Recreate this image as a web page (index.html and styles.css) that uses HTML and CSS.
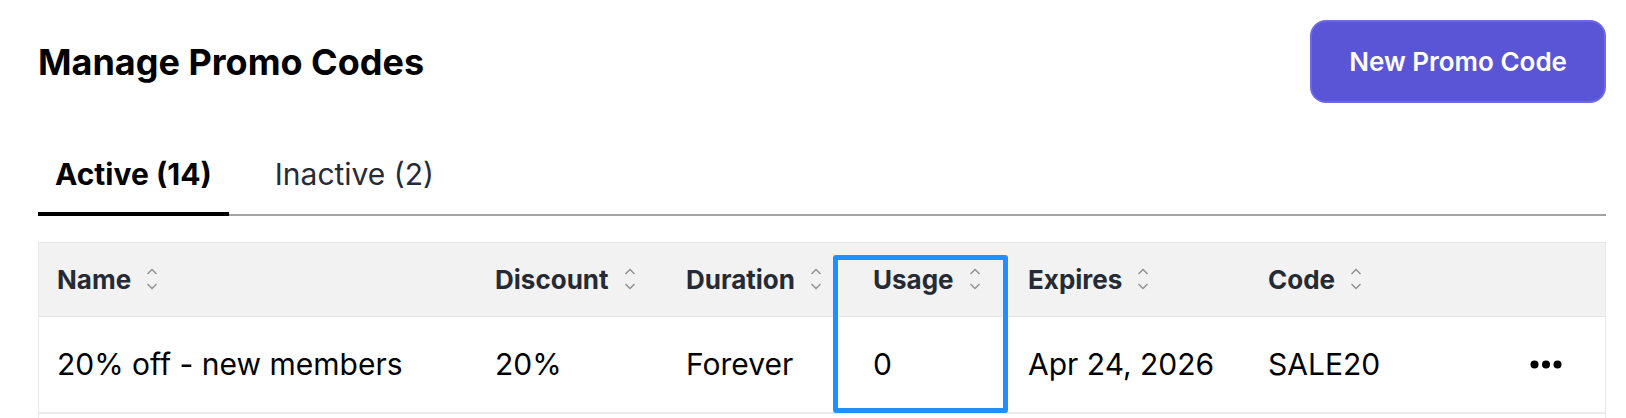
FILE: index.html
```html
<!DOCTYPE html>
<html lang="en">
<head>
<meta charset="utf-8">
<title>Manage Promo Codes</title>
<link rel="stylesheet" href="styles.css">
</head>
<body>
<div class="page">
  <header class="page-header">
    <h1 class="title">Manage Promo Codes</h1>
    <button class="btn-primary" type="button">New Promo Code</button>
  </header>

  <nav class="tabs">
    <a class="tab tab-active">Active (14)</a>
    <a class="tab">Inactive (2)</a>
  </nav>

  <div class="table-wrap">
    <table class="promo-table">
      <colgroup>
        <col class="col-name">
        <col class="col-discount">
        <col class="col-duration">
        <col class="col-usage">
        <col class="col-expires">
        <col class="col-code">
        <col class="col-actions">
      </colgroup>
      <thead>
        <tr>
          <th><span class="th-inner">Name<svg class="sort" viewBox="0 0 12 22"><polyline points="1.5,6 6,1.5 10.5,6"/><polyline points="1.5,16 6,20.5 10.5,16"/></svg></span></th>
          <th><span class="th-inner">Discount<svg class="sort" viewBox="0 0 12 22"><polyline points="1.5,6 6,1.5 10.5,6"/><polyline points="1.5,16 6,20.5 10.5,16"/></svg></span></th>
          <th><span class="th-inner">Duration<svg class="sort" viewBox="0 0 12 22"><polyline points="1.5,6 6,1.5 10.5,6"/><polyline points="1.5,16 6,20.5 10.5,16"/></svg></span></th>
          <th><span class="th-inner">Usage<svg class="sort" viewBox="0 0 12 22"><polyline points="1.5,6 6,1.5 10.5,6"/><polyline points="1.5,16 6,20.5 10.5,16"/></svg></span></th>
          <th><span class="th-inner">Expires<svg class="sort" viewBox="0 0 12 22"><polyline points="1.5,6 6,1.5 10.5,6"/><polyline points="1.5,16 6,20.5 10.5,16"/></svg></span></th>
          <th><span class="th-inner">Code<svg class="sort" viewBox="0 0 12 22"><polyline points="1.5,6 6,1.5 10.5,6"/><polyline points="1.5,16 6,20.5 10.5,16"/></svg></span></th>
          <th></th>
        </tr>
      </thead>
      <tbody>
        <tr>
          <td>20% off - new members</td>
          <td>20%</td>
          <td>Forever</td>
          <td>0</td>
          <td>Apr 24, 2026</td>
          <td>SALE20</td>
          <td><svg class="more" viewBox="0 0 32 9"><circle cx="4.5" cy="4.5" r="4"/><circle cx="16" cy="4.5" r="4"/><circle cx="27.5" cy="4.5" r="4"/></svg></td>
        </tr>
      </tbody>
    </table>
    <div class="highlight"></div>
  </div>
</div>
</body>
</html>
```

FILE: styles.css
```css
* { box-sizing: border-box; }

html, body {
  margin: 0;
  padding: 0;
  background: #ffffff;
}

body {
  font-family: Inter, "Noto Sans", "Liberation Sans", sans-serif;
  color: #000;
  overflow: hidden;
}

.page {
  padding: 20px 20px 0 38px;
}

.page-header {
  display: flex;
  align-items: center;
  justify-content: space-between;
}

.title {
  margin: 0;
  font-size: 36px;
  line-height: 42px;
  font-weight: 700;
  color: #000;
}

.btn-primary {
  height: 83px;
  padding: 0 37px;
  border: 2px solid #6d69e2;
  border-radius: 16px;
  background: #5a55d6;
  color: #fff;
  font-family: inherit;
  font-size: 26px;
  font-weight: 600;
}

.tabs {
  display: flex;
  margin-top: 29px;
  border-bottom: 2px solid #a3a3a3;
}

.tab {
  display: block;
  padding: 24px 17px 20px;
  font-size: 30px;
  line-height: 36px;
  color: #262b36;
  margin-bottom: -2px;
  border-bottom: 4px solid transparent;
}

.tab + .tab {
  margin-left: 29px;
}

.tab-active {
  font-weight: 700;
  color: #000;
  border-bottom-color: #000;
}

.table-wrap {
  position: relative;
  margin-top: 26px;
  padding-bottom: 40px;
  border: 1px solid #e8e8e8;
  border-bottom: none;
}

.promo-table {
  width: 100%;
  border-collapse: collapse;
  table-layout: fixed;
}

.col-name { width: 438px; }
.col-discount { width: 191px; }
.col-duration { width: 187px; }
.col-usage { width: 155px; }
.col-expires { width: 240px; }
.col-code { width: 262px; }
.col-actions { width: auto; }

.promo-table th {
  height: 73px;
  padding: 0 0 0 18px;
  background: #f2f2f2;
  text-align: left;
  font-size: 26px;
  font-weight: 700;
  color: #252a35;
  border-bottom: 1px solid #e6e6e6;
}

.th-inner {
  display: inline-flex;
  align-items: center;
}

.sort {
  width: 12px;
  height: 22px;
  margin-left: 15px;
  fill: none;
  stroke: #8c8c8c;
  stroke-width: 1.3;
}

.promo-table td {
  height: 97px;
  padding: 0 0 0 18px;
  font-size: 30px;
  font-weight: 400;
  color: #000;
  border-bottom: 2px solid #ebebeb;
  white-space: nowrap;
}

.more {
  display: block;
  width: 32px;
  height: 9px;
  fill: #000;
}

.highlight {
  position: absolute;
  left: 794px;
  top: 12px;
  width: 175px;
  height: 158px;
  border: 5px solid #1e90ff;
  border-radius: 3px;
  pointer-events: none;
}
```
